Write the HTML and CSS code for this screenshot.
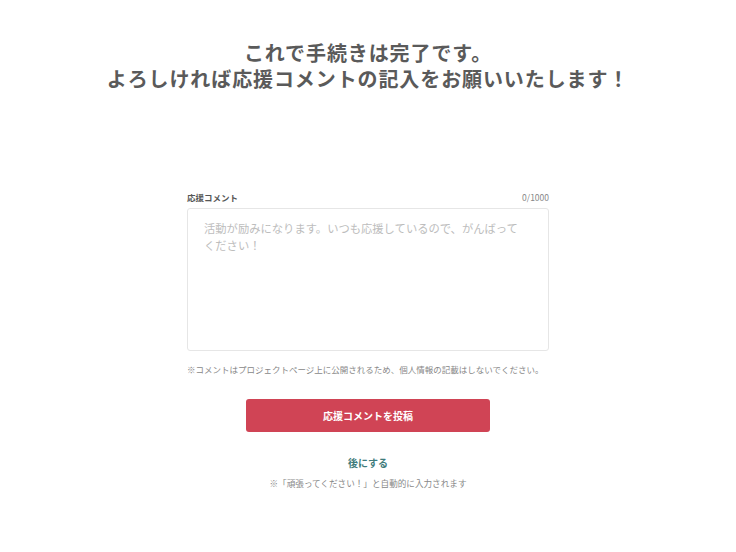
FILE: index.html
```html
<!DOCTYPE html>
<html lang="ja">
<head>
<meta charset="utf-8">
<link rel="stylesheet" href="styles.css">
</head>
<body>
<main class="page">
  <h1 class="title">これで手続きは完了です。<br>よろしければ応援コメントの記入をお願いいたします！</h1>
  <form class="form">
    <div class="label-row">
      <label class="label" for="c">応援コメント</label>
      <span class="counter">0/1000</span>
    </div>
    <textarea id="c" class="comment" placeholder="活動が励みになります。いつも応援しているので、がんばってください！"></textarea>
    <p class="note">※コメントはプロジェクトページ上に公開されるため、個人情報の記載はしないでください。</p>
    <button type="button" class="submit">応援コメントを投稿</button>
    <a class="later" href="#">後にする</a>
    <p class="auto-note">※「頑張ってください！」と自動的に入力されます</p>
  </form>
</main>
</body>
</html>
```
FILE: styles.css
```css
html, body {
  margin: 0;
  padding: 0;
  background: #fff;
}
body {
  font-family: "Noto Sans CJK JP", "Noto Sans", sans-serif;
  color: #555;
}
.page {
  display: flex;
  flex-direction: column;
  align-items: center;
  padding-top: 40px;
}
.title {
  margin: 0;
  font-size: 20px;
  line-height: 26px;
  font-weight: 700;
  color: #5a5a5a;
  text-align: center;
  letter-spacing: 0.9px;
}
.form {
  width: 362px;
  margin-top: 99px;
  display: flex;
  flex-direction: column;
  align-items: center;
}
.label-row {
  width: 100%;
  display: flex;
  justify-content: space-between;
  align-items: center;
  height: 12px;
  margin-bottom: 5px;
}
.label {
  font-size: 8.5px;
  font-weight: 700;
  color: #555;
  line-height: 12px;
}
.counter {
  font-size: 8.5px;
  color: #888;
  line-height: 12px;
}
.comment {
  box-sizing: border-box;
  width: 100%;
  height: 143px;
  margin: 0;
  padding: 11px 22px 11px 16px;
  border: 1px solid #e6e6e6;
  border-radius: 3px;
  resize: none;
  font-family: inherit;
  font-size: 11.3px;
  line-height: 17px;
  color: #555;
  outline: none;
}
.comment::placeholder {
  color: #bdbdbd;
}
.note {
  width: 100%;
  margin: 12px 0 0;
  font-size: 8.5px;
  line-height: 12px;
  color: #888;
}
.submit {
  margin-top: 24px;
  width: 244px;
  height: 33px;
  border: none;
  border-radius: 3px;
  background: #d04455;
  color: #fff;
  font-family: inherit;
  font-size: 10px;
  font-weight: 700;
  cursor: pointer;
}
.later {
  margin-top: 24px;
  font-size: 10px;
  line-height: 14px;
  font-weight: 700;
  color: #3e7b7b;
  text-decoration: none;
}
.auto-note {
  margin: 7px 0 0;
  font-size: 8.6px;
  line-height: 12px;
  color: #888;
}
```
